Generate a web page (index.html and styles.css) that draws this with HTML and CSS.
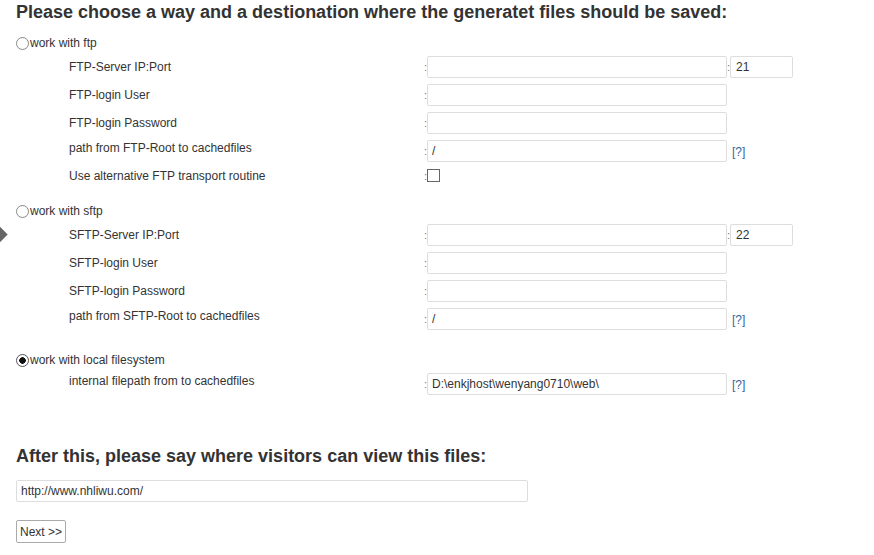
FILE: index.html
```html
<!DOCTYPE html>
<html lang="en">
<head>
    <meta charset="UTF-8">
    <meta name="viewport" content="width=device-width, initial-scale=1.0">
    <title>Save Destination</title>
    <link rel="stylesheet" href="styles.css">
</head>
<body>
    <div class="side-arrow"></div>
    <h1>Please choose a way and a destionation where the generatet files should be saved:</h1>
    <form id="dest-form">
        <div class="section">
            <label class="option"><input type="radio" name="way" value="ftp">work with ftp</label>
            <div class="row">
                <span class="label">FTP-Server IP:Port</span>
                <span class="colon">:</span><input type="text" class="field">
                <span class="colon">:</span><input type="text" class="port" value="21">
            </div>
            <div class="row">
                <span class="label">FTP-login User</span>
                <span class="colon">:</span><input type="text" class="field">
            </div>
            <div class="row">
                <span class="label">FTP-login Password</span>
                <span class="colon">:</span><input type="password" class="field">
            </div>
            <div class="row">
                <span class="label raised">path from FTP-Root to cachedfiles</span>
                <span class="colon">:</span><input type="text" class="field" value="/">
                <a href="#" class="help">[?]</a>
            </div>
            <div class="row short">
                <span class="label">Use alternative FTP transport routine</span>
                <span class="colon">:</span><input type="checkbox" class="check">
            </div>
        </div>

        <div class="section">
            <label class="option"><input type="radio" name="way" value="sftp">work with sftp</label>
            <div class="row">
                <span class="label">SFTP-Server IP:Port</span>
                <span class="colon">:</span><input type="text" class="field">
                <span class="colon">:</span><input type="text" class="port" value="22">
            </div>
            <div class="row">
                <span class="label">SFTP-login User</span>
                <span class="colon">:</span><input type="text" class="field">
            </div>
            <div class="row">
                <span class="label">SFTP-login Password</span>
                <span class="colon">:</span><input type="password" class="field">
            </div>
            <div class="row">
                <span class="label raised">path from SFTP-Root to cachedfiles</span>
                <span class="colon">:</span><input type="text" class="field" value="/">
                <a href="#" class="help">[?]</a>
            </div>
        </div>

        <div class="section local">
            <label class="option"><input type="radio" name="way" value="local" checked>work with local filesystem</label>
            <div class="row">
                <span class="label raised">internal filepath from to cachedfiles</span>
                <span class="colon">:</span><input type="text" class="field" value="D:\enkjhost\wenyang0710\web\">
                <a href="#" class="help">[?]</a>
            </div>
        </div>

        <h2>After this, please say where visitors can view this files:</h2>
        <input type="text" class="url" value="http://www.nhliwu.com/">
        <div class="actions">
            <button type="submit">Next &gt;&gt;</button>
        </div>
    </form>
</body>
</html>
```

FILE: styles.css
```css
body {
    font-family: "Liberation Sans", Arial, sans-serif;
    font-size: 12px;
    color: #333;
    background-color: #fff;
    margin: 0;
    padding: 0 16px;
}

h1, h2 {
    font-size: 18px;
    font-weight: bold;
    line-height: 24px;
    margin: 0;
    color: #333;
}

h2 {
    margin-top: 46px;
}

.side-arrow {
    position: absolute;
    left: -8px;
    top: 228px;
    width: 13px;
    height: 13px;
    background-color: #666;
    transform: rotate(45deg);
}

.section {
    margin-top: 9px;
}

.section + .section {
    margin-top: 15px;
}

.section.local {
    margin-top: 17px;
}

.option {
    display: flex;
    align-items: center;
    height: 20px;
}

input[type="radio"] {
    appearance: none;
    width: 13px;
    height: 13px;
    margin: 0 1px 0 0;
    border: 1px solid #888;
    border-radius: 50%;
    background-color: #fff;
}

input[type="radio"]:checked {
    background: radial-gradient(circle, #111 0 3px, #fff 3.5px);
    border-color: #555;
}

.row {
    display: flex;
    align-items: center;
    height: 28px;
    padding-left: 53px;
}

.row.short {
    height: 21px;
}

.label {
    width: 355px;
    flex-shrink: 0;
}

.label.raised {
    margin-bottom: 7px;
}

.colon {
    width: 3px;
    color: #777;
    font-size: 11px;
}

.field, .port, .url {
    box-sizing: border-box;
    height: 22px;
    border: 1px solid #ddd;
    border-radius: 2px;
    padding: 0 4px;
    font-family: "Liberation Sans", Arial, sans-serif;
    font-size: 12px;
    color: #333;
    margin: 0;
}

.field {
    width: 300px;
}

.port {
    width: 63px;
    padding-left: 5px;
}

.check {
    appearance: none;
    width: 13px;
    height: 13px;
    margin: 0 0 1px 0;
    border: 1px solid #666;
    background-color: #fff;
}

.help {
    color: #336699;
    text-decoration: none;
    margin-left: 5px;
    padding-top: 1px;
}

.url {
    width: 512px;
    margin-top: 12px;
    display: block;
}

.actions {
    margin-top: 18px;
}

button {
    font-family: "Liberation Sans", Arial, sans-serif;
    font-size: 12px;
    color: #333;
    background-color: #fff;
    border: 1px solid #aaa;
    border-radius: 2px;
    height: 23px;
    padding: 0 3px;
    cursor: pointer;
}
```
